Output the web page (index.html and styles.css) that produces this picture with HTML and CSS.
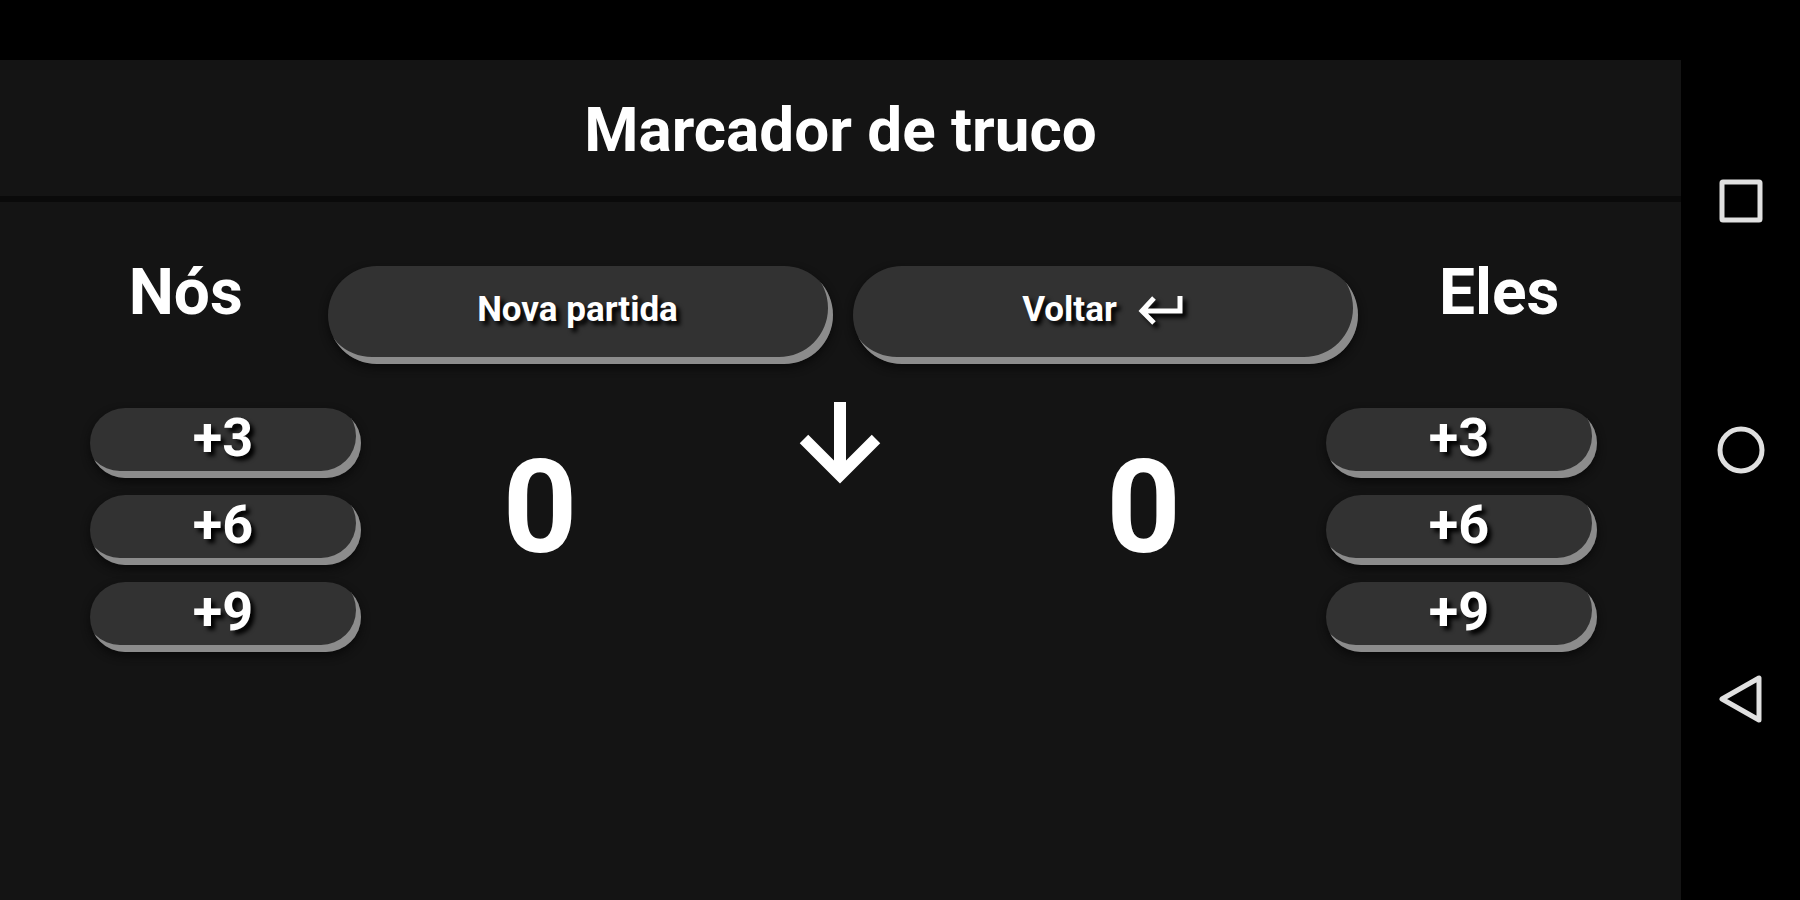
FILE: index.html
```html
<!DOCTYPE html>
<html lang="pt-BR">
<head>
    <meta charset="UTF-8">
    <meta name="viewport" content="width=device-width, initial-scale=1.0">
    <title>Marcador de truco</title>
    <link rel="stylesheet" href="styles.css">
</head>
<body>
    <div class="app">
        <header class="header">
            <h1>Marcador de truco</h1>
        </header>

        <main>
            <!-- Team names and match actions -->
            <div class="top-row">
                <h2>Nós</h2>
                <div class="actions">
                    <button class="pill action" type="button">Nova partida</button>
                    <button class="pill action" type="button">
                        Voltar
                        <svg class="return-icon" viewBox="0 0 46 30" aria-hidden="true">
                            <path d="M43 1v15H6M17 3L5 16l12 12" fill="none" stroke="currentColor" stroke-width="5"/>
                        </svg>
                    </button>
                </div>
                <h2>Eles</h2>
            </div>

            <!-- Scores -->
            <div class="board">
                <div class="points">
                    <button class="pill" type="button">+3</button>
                    <button class="pill" type="button">+6</button>
                    <button class="pill" type="button">+9</button>
                </div>
                <div class="score">0</div>
                <div class="turn">
                    <svg class="turn-icon" viewBox="0 0 82 82" aria-hidden="true">
                        <path d="M41 0v72M5 37l36 36 36-36" fill="none" stroke="currentColor" stroke-width="12"/>
                    </svg>
                </div>
                <div class="score">0</div>
                <div class="points">
                    <button class="pill" type="button">+3</button>
                    <button class="pill" type="button">+6</button>
                    <button class="pill" type="button">+9</button>
                </div>
            </div>
        </main>
    </div>

    <nav class="system-nav">
        <button type="button" aria-label="Recentes">
            <svg viewBox="0 0 50 50"><rect x="6" y="6" width="38" height="38" rx="1"/></svg>
        </button>
        <button type="button" aria-label="Início">
            <svg viewBox="0 0 50 50"><circle cx="25" cy="25" r="21"/></svg>
        </button>
        <button type="button" aria-label="Voltar">
            <svg viewBox="0 0 50 50"><path d="M43 4v42L6 25z"/></svg>
        </button>
    </nav>
</body>
</html>
```
FILE: styles.css
```css
* {
    box-sizing: border-box;
}
body {
    margin: 0;
    min-height: 100vh;
    display: flex;
    background-color: #000;
    color: #fff;
    font-family: Roboto, Arial, sans-serif;
}
h1, h2 {
    margin: 0;
    font-weight: 700;
    line-height: 72px;
    text-align: center;
}
h1 {
    font-size: 62px;
}
h2 {
    font-size: 64px;
}
.app {
    flex: 1;
    margin-top: 60px;
    background-color: #141414;
}
.header {
    padding: 34px 0 30px;
    border-bottom: 6px solid #0a0a0a;
}
.top-row {
    display: flex;
    padding: 64px 40px 0 44px;
}
.top-row h2 {
    flex: 1;
    line-height: 54px;
}
.actions {
    display: flex;
    gap: 20px;
    width: 1030px;
    max-width: 65%;
}
.pill {
    border: none;
    border-radius: 50px;
    background-color: #323232;
    box-shadow: inset -5px -7px 0 #8c8c8c, 0 4px 8px #0a0a0a;
    color: #fff;
    font-family: inherit;
    font-size: 54px;
    font-weight: 700;
    line-height: 60px;
    text-shadow: 4px 4px 4px #000;
    padding: 0 5px 10px 0;
    cursor: pointer;
}
.action {
    flex: 1;
    display: flex;
    align-items: center;
    justify-content: center;
    gap: 20px;
    height: 98px;
    padding-bottom: 10px;
    font-size: 35px;
}
.return-icon {
    width: 46px;
    height: 30px;
    filter: drop-shadow(4px 4px 2px #000);
}
.board {
    display: grid;
    grid-template-columns: 271fr 358fr 242fr 365fr 271fr;
    padding: 44px 84px 0 90px;
}
.points {
    display: flex;
    flex-direction: column;
    gap: 17px;
}
.score {
    padding-top: 22px;
    font-size: 130px;
    font-weight: 700;
    line-height: 156px;
    text-align: center;
}
.turn {
    text-align: center;
}
.turn-icon {
    display: block;
    width: 82px;
    height: 82px;
    margin: -6px auto 0;
}
.system-nav {
    width: 119px;
    padding: 176px 0;
    display: flex;
    flex-direction: column;
    align-items: center;
    justify-content: space-between;
}
.system-nav button {
    width: 50px;
    height: 50px;
    padding: 0;
    border: none;
    background: none;
    cursor: pointer;
}
.system-nav svg {
    display: block;
    fill: none;
    stroke: #e0e0e0;
    stroke-width: 5;
    stroke-linejoin: round;
}
```
